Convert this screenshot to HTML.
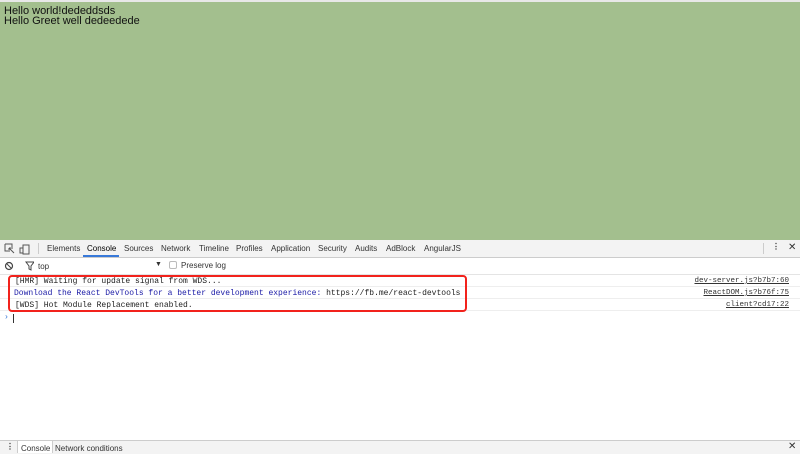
<html><head><style>
body{margin:0;width:800px;height:453px;overflow:hidden;background:#fff;font-family:"Liberation Sans",sans-serif;position:relative}
.a{position:absolute}
.tab{position:absolute;top:244px;font-size:8px;color:#333}
.m{font-family:"Liberation Mono",monospace;font-size:8px;position:absolute;white-space:nowrap}
.r{position:absolute;left:0;width:800px;height:0;border-top:1px solid #eee}
.lnk{text-decoration:underline;color:#333;font-size:7.5px}
</style></head><body>
<div class="a" style="left:0;top:0;width:800px;height:2px;background:#e8e8e8"></div>
<div class="a" style="left:0;top:2px;width:800px;height:238px;background:#a3bf8e"></div>
<div class="a" style="left:4px;top:6px;font-size:11px;line-height:10px;color:#111">Hello world!dededdsds<br>Hello Greet well dedeedede</div>
<div class="a" style="left:0;top:240px;width:800px;height:17px;background:#f3f3f3;border-bottom:1px solid #ccc"></div>
<svg class="a" style="left:4px;top:243px" width="30" height="12"><path d="M1 1h7v3M1 1v7h3M5 5l5 5M5 5v4M5 5h4" stroke="#555" fill="none"/><rect x="19" y="2" width="6" height="9" stroke="#555" fill="none"/><rect x="16" y="5" width="3" height="5" stroke="#555" fill="none"/></svg>
<div class="a" style="left:38px;top:243px;width:1px;height:11px;background:#ccc"></div>
<div class="tab" style="left:47px">Elements</div>
<div class="tab" style="left:87px;color:#000">Console</div>
<div class="a" style="left:83px;top:255px;width:36px;height:2px;background:#3879d9"></div>
<div class="tab" style="left:124px">Sources</div>
<div class="tab" style="left:161px">Network</div>
<div class="tab" style="left:199px">Timeline</div>
<div class="tab" style="left:236px">Profiles</div>
<div class="tab" style="left:271px">Application</div>
<div class="tab" style="left:318px">Security</div>
<div class="tab" style="left:355px">Audits</div>
<div class="tab" style="left:386px">AdBlock</div>
<div class="tab" style="left:424px">AngularJS</div>
<div class="a" style="left:763px;top:243px;width:1px;height:11px;background:#ccc"></div>
<div class="tab" style="left:772px;top:242px;font-weight:bold">⋮</div>
<div class="tab" style="left:788px;top:242px;font-size:10px">✕</div>
<div class="a" style="left:0;top:258px;width:800px;height:16px;background:#fff;border-bottom:1px solid #e4e4e4"></div>
<svg class="a" style="left:4px;top:261px" width="30" height="10"><circle cx="5" cy="5" r="3.5" stroke="#444" fill="none" stroke-width="1.2"/><path d="M2.5 2.5l5 5" stroke="#444"/><path d="M22 1h8l-3 4v4l-2-1v-3z" stroke="#444" fill="none"/></svg>
<div class="tab" style="left:38px;top:262px">top</div>
<div class="tab" style="left:155px;top:261px;font-size:7px">▼</div>
<div class="a" style="left:169px;top:261px;width:6px;height:6px;border:1px solid #bbb;border-radius:2px"></div>
<div class="tab" style="left:181px;top:261px">Preserve log</div>
<div class="r" style="top:286px"></div><div class="r" style="top:298px"></div><div class="r" style="top:310px"></div>
<div class="m" style="left:15px;top:277px;color:#222">[HMR] Waiting for update signal from WDS...</div>
<div class="m" style="left:14px;top:289px;color:#1a1aa6">Download the React DevTools for a better development experience: <span style="color:#222">https://fb.me/react-devtools</span></div>
<div class="m" style="left:15px;top:301px;color:#222">[WDS] Hot Module Replacement enabled.</div>
<div class="m lnk" style="right:11px;top:277px">dev-server.js?b7b7:60</div>
<div class="m lnk" style="right:11px;top:289px">ReactDOM.js?b76f:75</div>
<div class="m lnk" style="right:11px;top:301px">client?cd17:22</div>
<div class="a" style="left:8px;top:275px;width:455px;height:33px;border:2.5px solid #f2221c;border-radius:4px"></div>
<div class="m" style="left:4px;top:313px;color:#3879d9">›</div>
<div class="a" style="left:13px;top:314px;width:1px;height:9px;background:#333"></div>
<div class="a" style="left:0;top:440px;width:800px;height:13px;background:#f3f3f3;border-top:1px solid #ccc"></div>
<div class="tab" style="left:6px;top:442px;font-weight:bold">⋮</div>
<div class="a" style="left:17px;top:441px;width:34px;height:12px;background:#fff;border-left:1px solid #ccc;border-right:1px solid #ccc"></div>
<div class="tab" style="left:21px;top:444px">Console</div>
<div class="tab" style="left:55px;top:444px">Network conditions</div>
<div class="tab" style="left:788px;top:441px;font-size:10px">✕</div>
</body></html>
